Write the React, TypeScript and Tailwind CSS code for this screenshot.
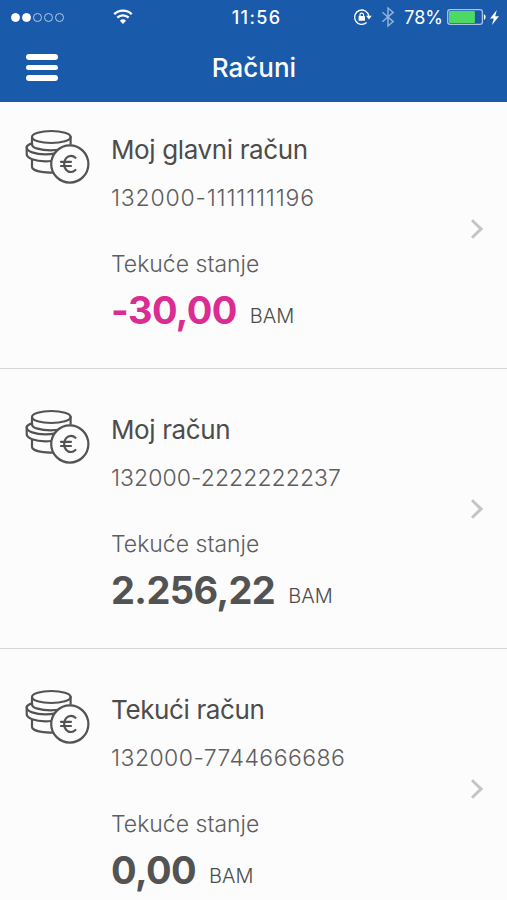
import { clsx } from "clsx"

interface Account {
    name: string
    number: string
    numberClass: string
    balance: string
    currency: string
    negative?: boolean
}

const accounts: Account[] = [
    { name: "Moj glavni račun", number: "132000-1111111196", numberClass: "tracking-[0.8px]", balance: "-30,00", currency: "BAM", negative: true },
    { name: "Moj račun", number: "132000-2222222237", numberClass: "tracking-[0.05px]", balance: "2.256,22", currency: "BAM" },
    { name: "Tekući račun", number: "132000-7744666686", numberClass: "tracking-[0.45px]", balance: "0,00", currency: "BAM" },
]

function WifiIcon() {
    return (
        <svg width="20" height="16" viewBox="0 0 20 16" fill="none" stroke="white">
            <path d="M1.2 5.2a12.6 12.6 0 0 1 17.6 0" strokeWidth="2.4" />
            <path d="M4.3 8.7a8.2 8.2 0 0 1 11.4 0" strokeWidth="2.4" />
            <path d="M10 15 6.9 11.8a4.5 4.5 0 0 1 6.2 0Z" fill="white" stroke="none" />
        </svg>
    )
}

function RotationLockIcon() {
    return (
        <svg width="20" height="18" viewBox="0 0 20 18" fill="none" stroke="white">
            <path d="M13.6 14.6A7.2 7.2 0 1 1 15.9 8" strokeWidth="1.4" />
            <path d="M13.2 7.8h5.6L16 11.6Z" fill="white" stroke="none" />
            <rect x="5.6" y="8" width="6.4" height="4.8" rx="0.6" fill="white" stroke="none" />
            <path d="M7 8.2V6.9a1.8 1.8 0 0 1 3.6 0v1.3" strokeWidth="1.2" />
        </svg>
    )
}

function BluetoothIcon() {
    return (
        <svg width="14" height="22" viewBox="0 0 14 22" fill="none" stroke="#8fb2dc" strokeWidth="1.5">
            <path d="M1.4 6.2 12.2 15.6 7 20V2l5.2 4.4L1.4 15.8" />
        </svg>
    )
}

function BatteryIcon() {
    return (
        <svg width="39" height="16" viewBox="0 0 39 16">
            <rect x="0.7" y="0.7" width="34.8" height="14.6" rx="2.4" fill="none" stroke="#a9c3e4" strokeWidth="1.3" />
            <rect x="2" y="2" width="26" height="12" rx="1" fill="#4cd964" />
            <path d="M37 5.2c1.2.4 1.7 1.4 1.7 2.8s-.5 2.4-1.7 2.8Z" fill="white" />
        </svg>
    )
}

function BoltIcon() {
    return (
        <svg width="9" height="15" viewBox="0 0 9 15" fill="white">
            <path d="M6.8 0 0 8.4h3.8L2 15l7-8.8H5.2Z" />
        </svg>
    )
}

function CoinsIcon() {
    return (
        <svg width="66" height="56" viewBox="0 0 66 56" fill="none" stroke="#535353" strokeWidth="2.2" strokeLinecap="round" strokeLinejoin="round">
            <ellipse cx="26.3" cy="8" rx="19.3" ry="6" />
            <path d="M7 8v7.4c0 3.4 8.4 5.9 18.6 5.9 3.6 0 6.6-.3 9-.8" />
            <path d="M45.6 8v7" />
            <path d="M7 14.4c-3.4 1-5.3 2.4-5.3 4 0 3.9 8.2 7 18.8 7 3.2 0 6-.2 8.6-.7" />
            <path d="M1.7 18.4v6.9c0 3.9 8.2 7 18.8 7 2 0 3.8-.1 5.4-.3" />
            <path d="M7 31v6.8c0 3.2 7.6 5.6 18.6 5.9l2.4-.1" />
            <circle cx="44.8" cy="35" r="18.6" fill="#fcfcfc" />
            <path d="M50.4 28.8c-1.2-1.3-2.6-2-4.4-2-4 0-6.8 3.5-6.8 8.1s2.8 8.1 6.8 8.1c1.8 0 3.2-.7 4.4-2M36 32.8h10M36 37h10" strokeWidth="2.2" />
        </svg>
    )
}

function StatusBar() {
    return (
        <div className="flex h-[34px] items-center pl-[11px] pr-[8px]">
            <div className="flex w-[102px] gap-[2px]">
                {[true, true, false, false, false].map((filled, i) => (
                    <span
                        key={i}
                        className={clsx("h-[9px] w-[9px] rounded-full border", filled ? "border-white bg-white" : "border-[#b4cbe8]")}
                    />
                ))}
            </div>
            <WifiIcon />
            <span className="ml-[99px] w-[122px] text-[18px] font-medium tracking-[1.4px]">11:56</span>
            <RotationLockIcon />
            <div className="ml-[8px]">
                <BluetoothIcon />
            </div>
            <span className="ml-[9px] w-[43px] text-[18px] whitespace-nowrap">78%</span>
            <BatteryIcon />
            <div className="ml-[4px]">
                <BoltIcon />
            </div>
        </div>
    )
}

function AccountRow({ account }: { account: Account }) {
    return (
        <li className="flex h-[280px] items-center border-b border-[#d6d6d6] pl-[25px] pr-[23px]">
            <div className="w-[86px] self-start pt-[40px]">
                <CoinsIcon />
            </div>
            <div className="flex-1 self-start pt-[45px] whitespace-nowrap text-[#5e5e5e]">
                <h2 className="text-[26px] leading-[32px] tracking-[-0.37px] text-[#4c4c4c]">{account.name}</h2>
                <p className={clsx("mt-[16px] text-[23px] leading-[32px] font-light", account.numberClass)}>{account.number}</p>
                <p className="mt-[34px] text-[23px] leading-[32px] font-light">Tekuće stanje</p>
                <div className="mt-[6px] flex items-baseline gap-[13px] leading-[48px]">
                    <span
                        className={clsx(
                            "text-[38px] font-bold tracking-[-0.6px]",
                            account.negative ? "text-[#db2c93]" : "text-[#535353]"
                        )}
                    >
                        {account.balance}
                    </span>
                    <span className="relative -top-px text-[20px] font-light text-[#4c4c4c]">{account.currency}</span>
                </div>
            </div>
            <svg className="mt-px" width="14" height="20" viewBox="0 0 14 20" fill="none" stroke="#c4c4c4" strokeWidth="3">
                <path d="M2 1.2 11 10l-9 8.8" />
            </svg>
        </li>
    )
}

export default function App() {
    return (
        <div className="h-[900px] w-[507px] overflow-hidden bg-[#fcfcfc] font-['Inter',sans-serif]">
            <header className="relative z-10 h-[102px] bg-[#1a5aaa] text-white">
                <StatusBar />
                <div className="flex h-[67px] items-center pl-[26px]">
                    <button className="flex w-[32px] flex-col gap-[5px]">
                        <span className="h-[5.5px] w-full rounded-full bg-white" />
                        <span className="h-[5.5px] w-full rounded-full bg-white" />
                        <span className="h-[5.5px] w-full rounded-full bg-white" />
                    </button>
                    <h1 className="flex-1 pr-[57px] text-center text-[26px] font-medium">Računi</h1>
                </div>
            </header>

            {/* The list is scrolled slightly under the header */}
            <ul className="-mt-[13px]">
                {accounts.map((account) => (
                    <AccountRow key={account.number} account={account} />
                ))}
            </ul>
        </div>
    )
}
